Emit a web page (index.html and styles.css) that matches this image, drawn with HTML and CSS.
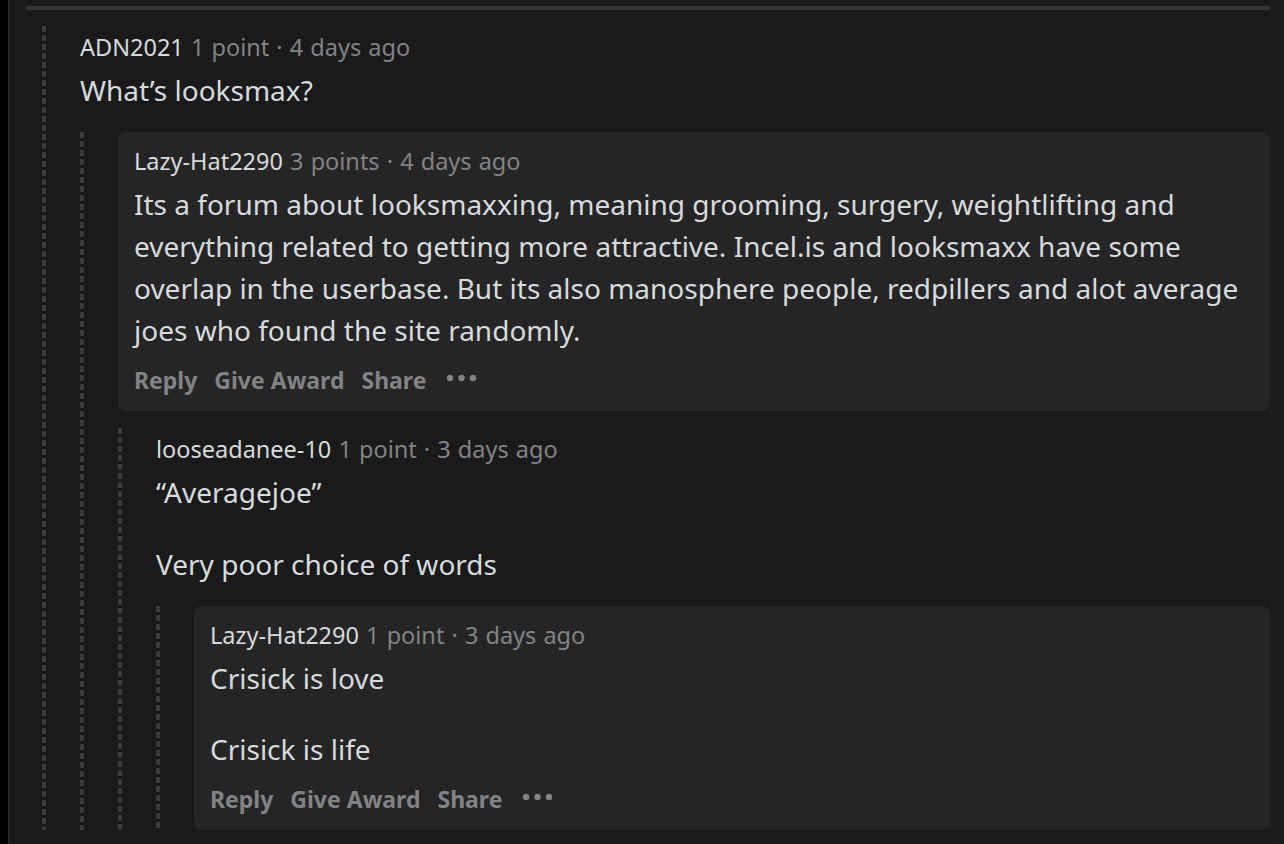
FILE: index.html
```html
<!DOCTYPE html>
<html lang="en">
<head>
<meta charset="utf-8">
<title>Comments</title>
<link rel="stylesheet" href="styles.css">
</head>
<body>
<div class="edge"></div>
<main class="panel">
  <div class="divider"></div>
  <div class="thread">
    <div class="comment">
      <div class="rail"><div class="line"></div></div>
      <div class="main">
        <div class="plain">
          <div class="meta"><span class="author">ADN2021</span> <span class="info">1 point · 4 days ago</span></div>
          <div class="text"><p>What’s looksmax?</p></div>
        </div>
        <div class="children">
          <div class="comment">
            <div class="rail"><div class="line"></div></div>
            <div class="main">
              <div class="card">
                <div class="meta"><span class="author">Lazy-Hat2290</span> <span class="info">3 points · 4 days ago</span></div>
                <div class="text"><p>Its a forum about looksmaxxing, meaning grooming, surgery, weightlifting and everything related to getting more attractive. Incel.is and looksmaxx have some overlap in the userbase. But its also manosphere people, redpillers and alot average joes who found the site randomly.</p></div>
                <div class="actions">
                  <span class="act">Reply</span>
                  <span class="act">Give Award</span>
                  <span class="act">Share</span>
                  <svg class="dots" width="32" height="8" viewBox="0 0 32 8"><circle cx="4" cy="4" r="3.2"/><circle cx="15.5" cy="4" r="3.2"/><circle cx="27" cy="4" r="3.2"/></svg>
                </div>
              </div>
              <div class="children after-card">
                <div class="comment">
                  <div class="rail"><div class="line"></div></div>
                  <div class="main">
                    <div class="plain">
                      <div class="meta"><span class="author">looseadanee-10</span> <span class="info">1 point · 3 days ago</span></div>
                      <div class="text"><p>“Averagejoe”</p><p>Very poor choice of words</p></div>
                    </div>
                    <div class="children">
                      <div class="comment">
                        <div class="rail"><div class="line"></div></div>
                        <div class="main">
                          <div class="card">
                            <div class="meta"><span class="author">Lazy-Hat2290</span> <span class="info">1 point · 3 days ago</span></div>
                            <div class="text"><p>Crisick is love</p><p>Crisick is life</p></div>
                            <div class="actions">
                              <span class="act">Reply</span>
                              <span class="act">Give Award</span>
                              <span class="act">Share</span>
                              <svg class="dots" width="32" height="8" viewBox="0 0 32 8"><circle cx="4" cy="4" r="3.2"/><circle cx="15.5" cy="4" r="3.2"/><circle cx="27" cy="4" r="3.2"/></svg>
                            </div>
                          </div>
                        </div>
                      </div>
                    </div>
                  </div>
                </div>
              </div>
            </div>
          </div>
        </div>
      </div>
    </div>
  </div>
</main>
</body>
</html>
```
FILE: styles.css
```css
html, body {
  margin: 0;
  padding: 0;
  height: 844px;
  overflow: hidden;
}
body {
  background: #1c1c1d;
  display: flex;
  font-family: "Noto Sans", "Liberation Sans", sans-serif;
}
.edge {
  width: 8px;
  flex: none;
  background: #000;
}
.panel {
  width: 1261px;
  flex: none;
  background: #1a1a1b;
  border-left: 1px solid #2c2c2d;
  min-height: 844px;
}
.divider {
  margin: 6px 0 0 17px;
  height: 4px;
  background: #343536;
}
.thread {
  padding: 16px 0 0 33px;
}
.comment {
  display: flex;
}
.rail {
  width: 38px;
  flex: none;
  display: flex;
}
.line {
  width: 4px;
  margin-left: 0;
  background: repeating-linear-gradient(to bottom, #3c3c3e 0 6px, transparent 6px 9px);
}
.main {
  flex: 1;
  min-width: 0;
}
.plain {
  padding-top: 8px;
}
.card {
  background: #252526;
  border-radius: 8px;
  padding: 16px 16px 15px 16px;
}
.meta {
  font-family: "Noto Sans", "Liberation Sans", sans-serif;
  font-size: 23.5px;
  line-height: 26px;
  height: 26px;
  white-space: nowrap;
  word-spacing: 1px;
}
.author {
  color: #d7dadc;
}
.info {
  color: #818384;
}
.text {
  margin-top: 9px;
  color: #d7dadc;
  font-size: 28px;
  line-height: 42px;
}
.text p {
  margin: 0;
}
.text p + p {
  margin-top: 30px;
}
.card .text p + p {
  margin-top: 29px;
}
.actions {
  margin-top: 13px;
  height: 32px;
  display: flex;
  align-items: center;
  gap: 17px;
}
.act {
  color: #818384;
  font-weight: 700;
  font-size: 23px;
  line-height: 32px;
}
.dots {
  fill: #818384;
  margin-left: 3px;
  margin-top: -4px;
}
.children {
  margin-top: 21px;
}
.children.after-card {
  margin-top: 17px;
}
```
